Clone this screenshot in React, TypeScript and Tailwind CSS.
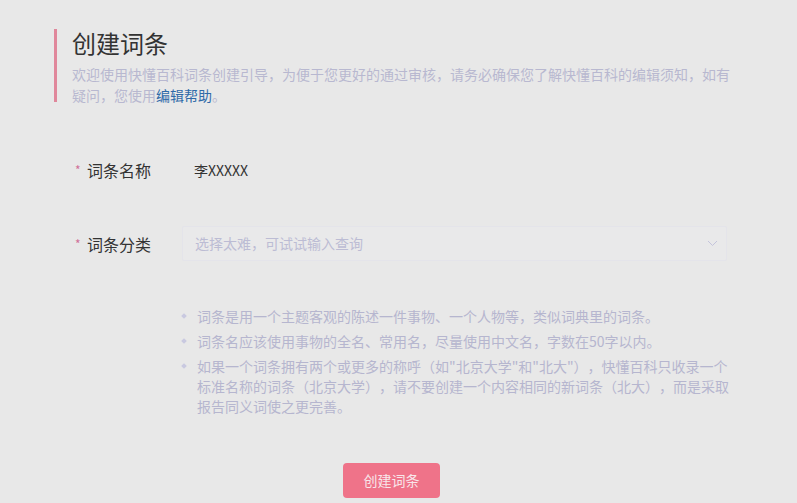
import React from 'react';

const tips: string[] = [
  '词条是用一个主题客观的陈述一件事物、一个人物等，类似词典里的词条。',
  '词条名应该使用事物的全名、常用名，尽量使用中文名，字数在50字以内。',
  '如果一个词条拥有两个或更多的称呼（如"北京大学"和"北大"），快懂百科只收录一个标准名称的词条（北京大学），请不要创建一个内容相同的新词条（北大），而是采取报告同义词使之更完善。',
];

const ChevronDown: React.FC = () => (
  <svg width="11" height="7" viewBox="0 0 11 7" fill="none" className="shrink-0">
    <path d="M1 1l4.5 4.5L10 1" stroke="#c4c4dc" strokeWidth="1" />
  </svg>
);

const App: React.FC = () => {
  return (
    <div
      className="min-h-screen w-full bg-[#e8e8e8] text-[#333] [text-spacing-trim:space-all]"
      style={{ fontFamily: '"Noto Sans CJK SC", "Noto Sans", sans-serif' }}
    >
      <div className="ml-[54px] w-[675px] pt-[29px]">
        {/* Header */}
        <div className="flex">
          <div className="w-[3px] h-[73px] bg-[#e0879b] shrink-0" />
          <div className="pl-[15px]">
            <h1 className="text-[24px] leading-[28px] font-normal text-[#333]">创建词条</h1>
            <p className="mt-[7px] w-[664px] text-[14px] leading-[21px] text-[#b8b8d0]">
              欢迎使用快懂百科词条创建引导，为便于您更好的通过审核，请务必确保您了解快懂百科的编辑须知，如有疑问，您使用
              <span className="text-[#2f6aa8]">编辑帮助</span>。
            </p>
          </div>
        </div>

        {/* Form */}
        <div className="mt-[46px] pl-[21px]">
          <div className="flex items-center h-[36px]">
            <div className="w-[107px] flex items-center">
              <span className="w-[12px] text-[12px] text-[#d0709a]">*</span>
              <span className="text-[16px]">词条名称</span>
            </div>
            <div className="w-[545px] h-[36px] flex items-center px-[12px] text-[14px] text-[#333]">
              李XXXXX
            </div>
          </div>

          <div className="flex items-center h-[35px] mt-[38px]">
            <div className="w-[107px] flex items-center">
              <span className="w-[12px] text-[12px] text-[#d0709a]">*</span>
              <span className="text-[16px]">词条分类</span>
            </div>
            <div className="w-[545px] h-[35px] flex items-center justify-between pl-[12px] pr-[8px] bg-[#e9e9ea] border border-[#e4e4ea] rounded-[2px]">
              <span className="text-[14px] text-[#bcbcd4]">选择太难，可试试输入查询</span>
              <ChevronDown />
            </div>
          </div>
        </div>

        {/* Tips */}
        <ul className="mt-[45px] ml-[128px] flex flex-col gap-[5px]">
          {tips.map((t, i) => (
            <li key={i} className="flex">
              <span className="w-[15px] shrink-0 pt-[8px]">
                <span className="block w-[4px] h-[4px] rotate-45 bg-[#c9c9e0]" />
              </span>
              <span className="w-[534px] text-[14px] leading-[20px] text-[#b6b6cf]">{t}</span>
            </li>
          ))}
        </ul>

        {/* Submit */}
        <div className="flex justify-center mt-[47px]">
          <button className="w-[97px] h-[35px] rounded-[4px] bg-[#ef7389] text-[14px] text-[#f8e6ea]">
            创建词条
          </button>
        </div>
      </div>
    </div>
  );
};

export default App;
